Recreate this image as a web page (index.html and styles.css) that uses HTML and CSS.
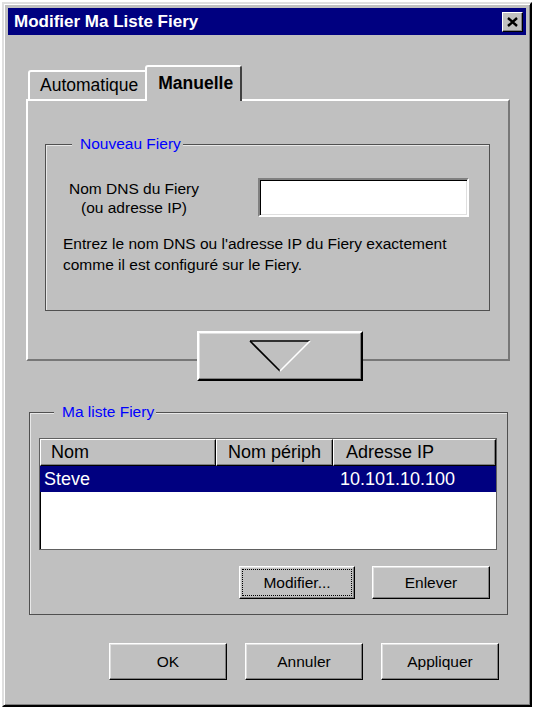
FILE: index.html
```html
<!DOCTYPE html>
<html lang="fr">
<head>
    <meta charset="UTF-8">
    <meta name="viewport" content="width=device-width, initial-scale=1.0">
    <title>Modifier Ma Liste Fiery</title>
    <link rel="stylesheet" href="styles.css">
</head>
<body>
    <div class="window">
        <div class="titlebar">
            <span class="title">Modifier Ma Liste Fiery</span>
            <button class="close-btn" aria-label="Fermer">
                <svg width="11" height="10" viewBox="0 0 11 10">
                    <path d="M1 1 L10 9 M10 1 L1 9" stroke="#000" stroke-width="2.4" fill="none"/>
                </svg>
            </button>
        </div>

        <div class="content">
            <div class="tabs">
                <div class="tab">Automatique</div>
                <div class="tab active">Manuelle</div>
            </div>

            <div class="tab-panel">
                <fieldset class="group group-new">
                    <legend>Nouveau Fiery</legend>
                    <div class="dns-row">
                        <div class="dns-label">Nom DNS du Fiery<br>(ou adresse IP)</div>
                        <input class="dns-input" type="text">
                    </div>
                    <p class="hint">Entrez le nom DNS ou l'adresse IP du Fiery exactement<br>comme il est configuré sur le Fiery.</p>
                </fieldset>
            </div>

            <div class="arrow-row">
                <button class="arrow-btn" aria-label="Ajouter">
                    <svg width="62" height="32" viewBox="0 0 62 32">
                        <path d="M1 1 L61 1" stroke="#000" stroke-width="1.6"/>
                        <path d="M1 1 L31 31" stroke="#000" stroke-width="1.6"/>
                        <path d="M31 31 L61 1" stroke="#fff" stroke-width="1.6"/>
                    </svg>
                </button>
            </div>

            <fieldset class="group group-list">
                <legend>Ma liste Fiery</legend>
                <div class="listview">
                    <div class="lv-header">
                        <div class="lv-col col-name">Nom</div>
                        <div class="lv-col col-dev">Nom périph</div>
                        <div class="lv-col col-ip">Adresse IP</div>
                    </div>
                    <div class="lv-row selected">
                        <div class="lv-cell col-name">Steve</div>
                        <div class="lv-cell col-dev"></div>
                        <div class="lv-cell col-ip">10.101.10.100</div>
                    </div>
                </div>
                <div class="list-actions">
                    <button class="btn btn-edit focused">Modifier...</button>
                    <button class="btn btn-remove">Enlever</button>
                </div>
            </fieldset>

            <div class="dialog-actions">
                <button class="btn btn-main">OK</button>
                <button class="btn btn-main">Annuler</button>
                <button class="btn btn-main">Appliquer</button>
            </div>
        </div>
    </div>
</body>
</html>
```

FILE: styles.css
```css
* {
    box-sizing: border-box;
}

body {
    margin: 0;
    background-color: white;
    font-family: "Liberation Sans", Arial, sans-serif;
    font-size: 15.5px;
    color: black;
}

.window {
    margin: 2px;
    width: 530px;
    height: 705px;
    padding: 4px;
    background-color: #c0c0c0;
    border: 2px solid;
    border-color: #dfdfdf #000 #000 #dfdfdf;
    box-shadow: inset 1px 1px #fff, inset -1px -1px #808080;
}

/* title bar */
.titlebar {
    height: 27px;
    padding: 0 3px 0 6px;
    background-color: #000080;
    display: flex;
    align-items: center;
    justify-content: space-between;
}

.title {
    color: white;
    font-weight: bold;
    font-size: 17px;
}

.close-btn {
    width: 21px;
    height: 20px;
    padding: 0;
    margin-top: 1px;
    background-color: #c0c0c0;
    border: 1px solid;
    border-color: #fff #000 #000 #fff;
    box-shadow: inset -1px -1px #808080;
    display: flex;
    align-items: center;
    justify-content: center;
}

.content {
    padding: 30px 16px 0 18px;
}

/* tabs */
.tabs {
    display: flex;
    align-items: flex-end;
    margin-bottom: -2px;
    position: relative;
    z-index: 1;
}

.tab {
    height: 29px;
    margin-left: 2px;
    margin-bottom: 2px;
    padding: 0 8px 0 10px;
    font-size: 17.5px;
    line-height: 27px;
    background-color: #c0c0c0;
    border: 2px solid;
    border-bottom: none;
    border-color: #fff #808080 transparent #fff;
    border-radius: 3px 3px 0 0;
}

.tab.active {
    height: 36px;
    margin-left: -3px;
    margin-bottom: 0;
    padding: 0 7px 0 11px;
    font-weight: bold;
    line-height: 32px;
    border-right-color: #404040;
}

.tab-panel {
    height: 262px;
    padding: 34px 18px 0 17px;
    border: 2px solid;
    border-color: #fff #777 #777 #fff;
}

/* group boxes */
.group {
    margin: 0;
    padding: 0;
    min-width: 0;
    border: 1px solid #505050;
    box-shadow: inset 1px 1px #e8e8e8;
}

.group legend {
    padding: 0 2px 0 8px;
    color: #0000ff;
    font-size: 15.5px;
    line-height: 18px;
    background-color: #c0c0c0;
}

.group-new {
    padding-bottom: 35px;
}

.group-new legend {
    margin-left: 26px;
}

.dns-row {
    display: flex;
    align-items: center;
    height: 39px;
    margin-top: 25px;
}

.dns-label {
    width: 176px;
    text-align: center;
    line-height: 19px;
}

.dns-input {
    width: 211px;
    height: 39px;
    margin: 0 0 0 36px;
    padding: 0 4px;
    background-color: white;
    border: 2px solid;
    border-color: #808080 #fff #fff #808080;
    box-shadow: inset 1px 1px #000, inset -1px -1px #dfdfdf;
    font: inherit;
}

.hint {
    margin: 16px 0 0 17px;
    line-height: 21px;
}

/* arrow button */
.arrow-row {
    display: flex;
    margin-top: -30px;
    padding-left: 171px;
}

.arrow-btn {
    width: 166px;
    height: 50px;
    padding: 0;
    background-color: #c0c0c0;
    border: 2px solid;
    border-color: #fff #000 #000 #fff;
    box-shadow: inset -1px -1px #808080, inset 1px 1px #dfdfdf;
    display: flex;
    align-items: center;
    justify-content: center;
}

/* my list */
.group-list {
    margin: 22px 2px 0 3px;
    padding-bottom: 15px;
}

.group-list legend {
    margin-left: 24px;
}

.listview {
    height: 112px;
    margin: 17px 10px 0 9px;
    background-color: white;
    border: 1px solid #606060;
    box-shadow: inset 1px 1px #000;
    font-size: 18px;
}

.lv-header {
    display: flex;
    height: 27px;
}

.lv-col {
    display: flex;
    align-items: center;
    background-color: #c0c0c0;
    border: 1px solid;
    border-color: #fff #000 #000 #fff;
    box-shadow: inset -1px -1px #808080;
}

.col-name {
    width: 176px;
    padding-left: 10px;
}

.col-dev {
    width: 117px;
    padding-left: 11px;
}

.col-ip {
    flex: 1;
    padding-left: 12px;
}

.lv-row {
    display: flex;
    align-items: center;
    height: 26px;
}

.lv-row .col-name {
    padding-left: 4px;
}

.lv-row .col-ip {
    padding-left: 7px;
}

.lv-row.selected {
    background-color: #000080;
    color: white;
}

.list-actions {
    display: flex;
    justify-content: flex-end;
    gap: 17px;
    margin: 16px 17px 0 0;
}

/* buttons */
.btn {
    height: 33px;
    padding: 0;
    font-family: inherit;
    font-size: 15.5px;
    color: black;
    background-color: #c0c0c0;
    border: 1px solid;
    border-color: #fff #000 #000 #fff;
    box-shadow: inset -1px -1px #808080, inset 1px 1px #dfdfdf;
}

.btn-edit {
    width: 116px;
}

.btn-remove {
    width: 118px;
}

.btn.focused {
    outline: 1px dotted black;
    outline-offset: -4px;
}

.dialog-actions {
    display: flex;
    justify-content: flex-end;
    gap: 18px;
    margin-top: 28px;
    padding-right: 11px;
}

.btn-main {
    width: 118px;
    height: 37px;
}
```
